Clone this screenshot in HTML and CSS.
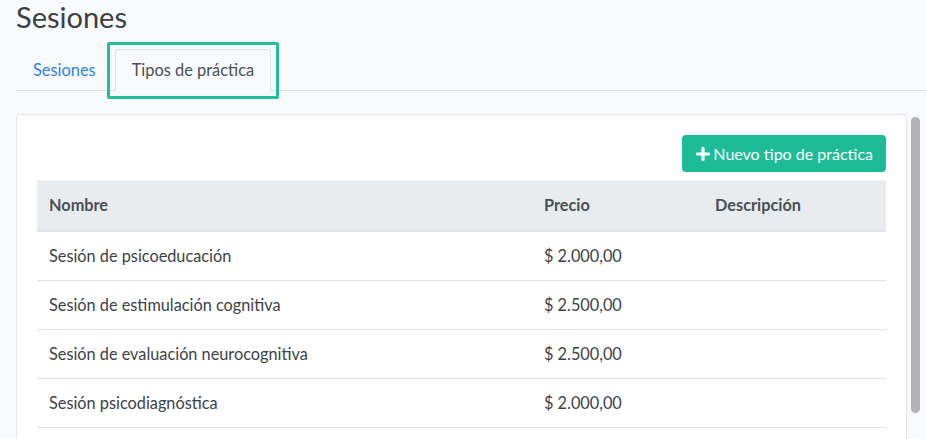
FILE: index.html
```html
<!DOCTYPE html>
<html lang="es">
<head>
<meta charset="utf-8">
<title>Sesiones</title>
<link rel="stylesheet" href="styles.css">
</head>
<body>
<div class="page">
  <h1 class="title">Sesiones</h1>
  <ul class="tabs">
    <li><a class="tab-link" href="#">Sesiones</a></li>
    <li><a class="tab-link active" href="#">Tipos de práctica</a></li>
  </ul>
  <div class="scroller">
    <div class="card">
      <div class="toolbar">
        <button class="btn-new" type="button">
          <svg class="plus" width="14" height="14" viewBox="0 0 14 14" aria-hidden="true"><path d="M7 1.5v11M1.5 7h11" stroke="#fff" stroke-width="3.2" stroke-linecap="round"/></svg>
          <span>Nuevo tipo de práctica</span>
        </button>
      </div>
      <table class="grid">
        <colgroup>
          <col class="c-name"><col class="c-price"><col class="c-desc">
        </colgroup>
        <thead>
          <tr><th>Nombre</th><th>Precio</th><th>Descripción</th></tr>
        </thead>
        <tbody>
          <tr><td>Sesión de psicoeducación</td><td>$ 2.000,00</td><td></td></tr>
          <tr><td>Sesión de estimulación cognitiva</td><td>$ 2.500,00</td><td></td></tr>
          <tr><td>Sesión de evaluación neurocognitiva</td><td>$ 2.500,00</td><td></td></tr>
          <tr><td>Sesión psicodiagnóstica</td><td>$ 2.000,00</td><td></td></tr>
        </tbody>
      </table>
    </div>
    <div class="scrollbar"><div class="thumb"></div></div>
  </div>
</div>
</body>
</html>
```

FILE: styles.css
```css
html, body {
  margin: 0;
  padding: 0;
  height: 100%;
  overflow: hidden;
}
body {
  background: #f8f9fa;
  font-family: Lato, "Open Sans", "Liberation Sans", sans-serif;
  color: #3e4349;
}
.page {
  padding-left: 16px;
}
.title {
  margin: 0;
  font-size: 29px;
  line-height: 34px;
  font-weight: 400;
  color: #3b4047;
}
.tabs {
  list-style: none;
  margin: 15px 0 0 0;
  padding: 0;
  display: flex;
  gap: 2px;
  border-bottom: 1px solid #dee2e6;
}
.tab-link {
  display: block;
  padding: 8px 16px;
  line-height: 24px;
  font-size: 16.4px;
  border: 1px solid transparent;
  border-radius: 4px 4px 0 0;
  margin-bottom: -1px;
  text-decoration: none;
  color: #2f83e6;
}
.tab-link.active {
  position: relative;
  color: #495057;
  background: #f8f9fa;
  border-color: #dee2e6 #dee2e6 #f8f9fa;
}
.tab-link.active::after {
  content: "";
  position: absolute;
  top: -8px;
  left: -9px;
  right: -9px;
  bottom: -9px;
  border: 3px solid #22bf9b;
  border-radius: 2px;
}
.scroller {
  margin-top: 23px;
  height: 326px;
  display: flex;
  align-items: flex-start;
  overflow: hidden;
}
.scrollbar {
  flex: 0 0 19px;
  align-self: stretch;
  background: #f8f9fa;
}
.thumb {
  width: 9px;
  height: 296px;
  margin: 3px 0 0 4px;
  border-radius: 5px;
  background: #b1b1b6;
}
.card {
  flex: 1;
  background: #fff;
  border: 1px solid #e3e6ea;
  border-radius: 4px;
  padding: 20px;
}
.toolbar {
  display: flex;
  justify-content: flex-end;
  margin-bottom: 8px;
}
.btn-new {
  display: flex;
  align-items: center;
  gap: 3px;
  height: 37px;
  padding: 0 13px 0 14px;
  border: 0;
  border-radius: 4px;
  background: #1ebc96;
  color: #fff;
  font-family: inherit;
  font-size: 16px;
}
.plus {
  display: block;
}
.grid {
  width: 100%;
  border-collapse: collapse;
  table-layout: fixed;
  font-size: 16.3px;
}
.c-name { width: 495px; }
.c-price { width: 171px; }
.grid th, .grid td {
  text-align: left;
  padding: 12px;
  line-height: 24px;
}
.grid th {
  padding-bottom: 13px;
  background: #e9ecef;
  color: #495057;
  font-weight: 700;
  border-top: 1px solid #f1f3f5;
  border-bottom: 2px solid #e2e6ea;
}
.grid td {
  border-bottom: 1px solid #dee2e6;
  color: #3d4248;
}
```
